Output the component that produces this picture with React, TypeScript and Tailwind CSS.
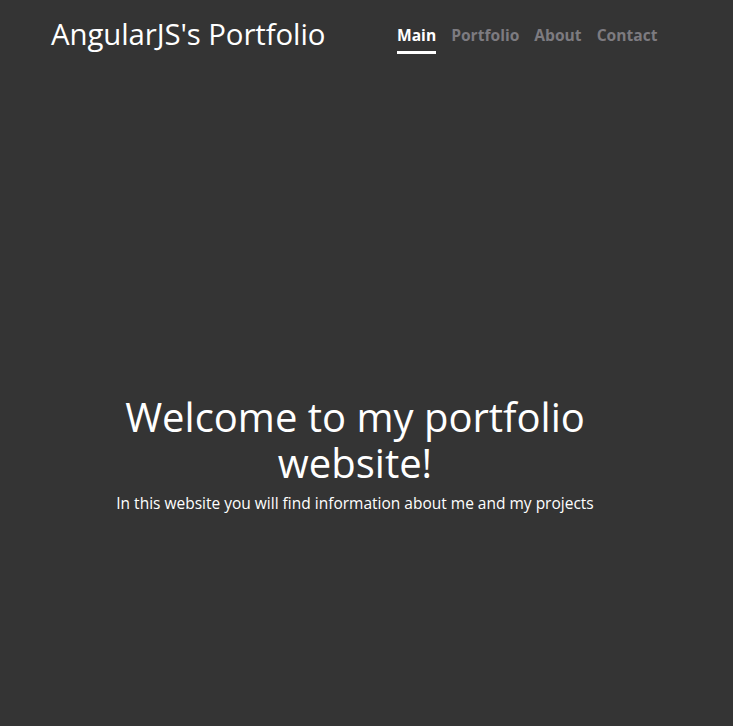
import React from 'react';

const links = ['Main', 'Portfolio', 'About', 'Contact'];

const App: React.FC = () => {
  const active = 'Main';

  return (
    <div
      className="min-h-screen w-full bg-[#343434] text-white"
      style={{ fontFamily: '"Open Sans", "Noto Sans", sans-serif' }}
    >
      <header className="flex items-start pl-[51px] pt-[16px]">
        <h1 className="w-[346px] text-[29.4px] leading-[36px] tracking-[-0.1px] text-white">AngularJS's Portfolio</h1>
        <nav className="flex gap-[15px] pt-[8px]">
          {links.map((l) => (
            <a
              key={l}
              href="#"
              className={`flex flex-col text-[15.6px] font-bold leading-[22px] ${
                l === active ? 'text-white' : 'text-[#7d7b80]'
              }`}
            >
              {l}
              {l === active && <span className="mt-[5px] h-[3px] w-full bg-white" />}
            </a>
          ))}
        </nav>
      </header>

      <main className="flex flex-col items-center pr-[23px] pt-[340px]">
        <h2 className="w-[480px] text-center text-[40px] leading-[46px] text-white">
          Welcome to my portfolio website!
        </h2>
        <p className="mt-[6px] text-[15.5px] leading-[22px] text-white">
          In this website you will find information about me and my projects
        </p>
      </main>
    </div>
  );
};

export default App;
